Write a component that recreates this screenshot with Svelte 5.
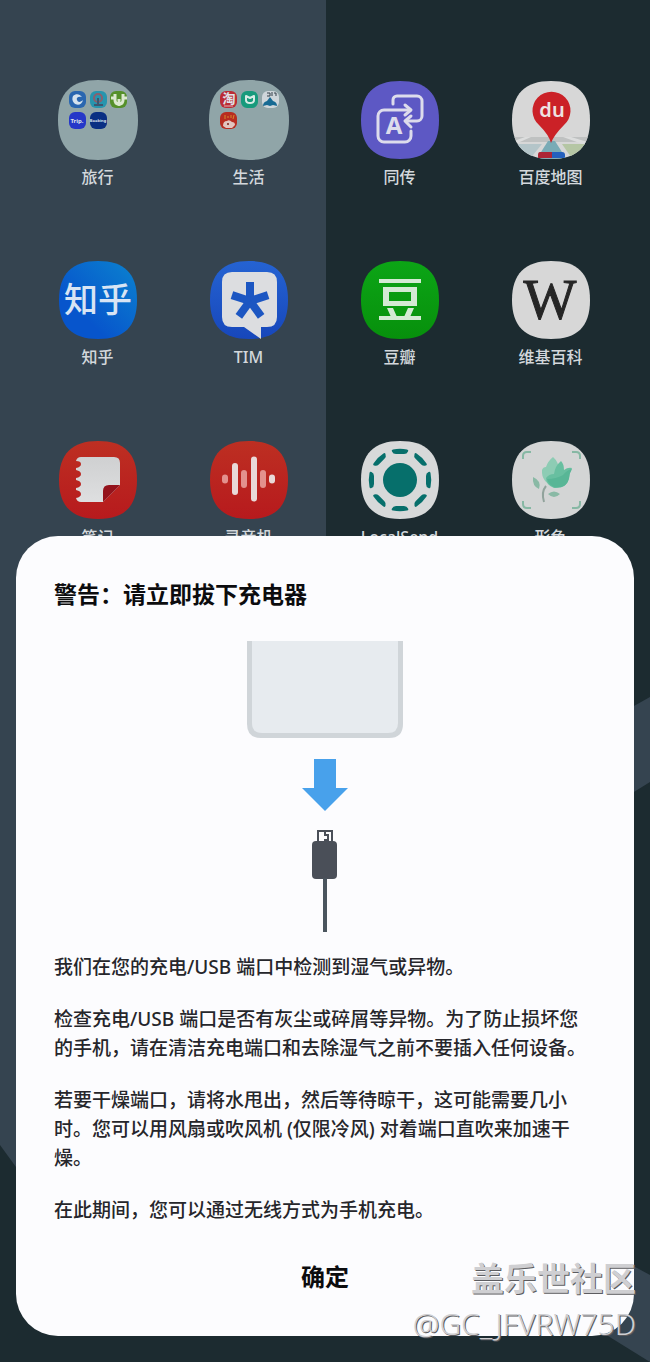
<script lang="ts">
  // Home screen with the moisture warning dialog on top.
  interface App {
    id: string;
    name: string;
  }

  const apps: App[] = [
    { id: 'travel', name: '旅行' },
    { id: 'life', name: '生活' },
    { id: 'interpreter', name: '同传' },
    { id: 'baidu', name: '百度地图' },
    { id: 'zhihu', name: '知乎' },
    { id: 'tim', name: 'TIM' },
    { id: 'douban', name: '豆瓣' },
    { id: 'wiki', name: '维基百科' },
    { id: 'notes', name: '笔记' },
    { id: 'recorder', name: '录音机' },
    { id: 'localsend', name: 'LocalSend' },
    { id: 'xingse', name: '形色' },
  ];

  const fills: Record<string, string> = {
    travel: '#90a5a8',
    life: '#90a5a8',
    interpreter: '#5d58c4',
    baidu: '#d7d7d7',
    zhihu: 'url(#zhihu-bg)',
    tim: 'url(#tim-bg)',
    douban: 'url(#douban-bg)',
    wiki: '#d7d7d7',
    notes: 'url(#red-bg)',
    recorder: 'url(#red-bg)',
    localsend: '#d7d9d9',
    xingse: '#d3d5d5',
  };

  const bars = [
    { x: 16, h: 9, dim: true },
    { x: 26, h: 32, dim: false },
    { x: 35, h: 18, dim: true },
    { x: 45, h: 45, dim: false },
    { x: 54, h: 18, dim: true },
    { x: 63, h: 9, dim: false },
  ];

  const full = 'M40 0C67 0 80 13 80 40S67 80 40 80 0 67 0 40 13 0 40 0Z';
  const round = 'M40 1C66 1 79 13 79 40S66 79 40 79 1 66 1 40 14 1 40 1Z';

  let open = $state(true);
</script>

{#snippet mini(x: number, y: number, fill: string)}
  <rect {x} {y} width="17" height="17" rx="6" {fill} />
{/snippet}

{#snippet icon(id: string)}
  <svg class="icon" viewBox="0 0 80 80" aria-hidden="true">
    <path d={id === 'travel' || id === 'life' ? full : round} fill={fills[id]} />
    {#if id === 'travel'}
      {@render mini(11, 11, '#2a66b0')}
      <path d="M15 16c3-3 7-2 9 1-4-1-6 1-5 3 1 3 4 2 6 0-1 5-6 6-9 3-2-2-2-5-1-7z" fill="#d5e2ee" />
      {@render mini(32, 11, '#2795ae')}
      <circle cx="40" cy="18" r="4" fill="none" stroke="#8b5f6d" stroke-width="2" />
      <path d="M40 18v6M36 25h9" stroke="#3d5670" stroke-width="2" />
      {@render mini(52, 11, '#55902a')}
      <path
        d="M57 14v6q0 4 4 4t4-4v-6M61 19v7M53 18h4M65 18h4"
        fill="none"
        stroke="#dce8d0"
        stroke-width="3"
      />
      {@render mini(11, 32, '#2537c8')}
      <text x="19" y="43" class="tiny" font-size="6">Trip.</text>
      {@render mini(32, 32, '#0a2f83')}
      <text x="40" y="42" class="tiny" font-size="4">Booking</text>
    {:else if id === 'life'}
      {@render mini(11, 11, '#bb2b35')}
      <text x="20" y="23" class="tiny" font-size="13">淘</text>
      <path d="M15 26h9" stroke="#e0b7b9" />
      {@render mini(32, 11, '#189a7c')}
      <path
        d="M37 16v4q0 3 4 3t4-3v-4l-4 2z"
        fill="none"
        stroke="#d8ebe5"
        stroke-width="2"
        stroke-linejoin="round"
      />
      {@render mini(53, 11, '#cfd6da')}
      <path d="M54 26q0-4 4-5l3-4 3 4q4 1 4 5l-4-1-3 1-3-1z" fill="#176a93" />
      <path d="M58 13h3v3h-3M63 12v4M65 13h2v3" fill="none" stroke="#34414a" />
      {@render mini(11, 32, '#b82d20')}
      <path d="M14 46q0-5 4-5 2-2 5 1 3 0 3 3l-3 3h-6z" fill="#e2c5bf" />
      <circle cx="19" cy="44" r="1" fill="#7d2018" />
      <path d="M16 35v4M18 37h2M22 35v3M25 35l-1 4" stroke="#d68b2c" />
    {:else if id === 'interpreter'}
      <g class="line">
        <path d="M50 30H24a6 6 0 0 0-6 6v20a6 6 0 0 0 6 6h21a6 6 0 0 0 6-6v-5" />
        <path d="M45 25l6 5-6 5M51 36l-6 5 6 6" />
        <path d="M33 24v-4a4 4 0 0 1 4-4h20a5 5 0 0 1 5 5v15a5 5 0 0 1-5 5H46" />
      </g>
      <text x="34" y="54" class="latin" font-size="24" fill="#dddcec">A</text>
    {:else if id === 'baidu'}
      <clipPath id="map-clip"><path d={round} /></clipPath>
      <g clip-path="url(#map-clip)">
        <path d="M0 57h80v5H0z" fill="#bfc1c1" />
        <path d="M0 64h31L18 80H0z" fill="#b4c5c9" />
        <path d="M0 62l14-5h6L0 66zM60 57l20 6v4L52 57z" fill="#dcdddd" />
        <path d="M37 61h7l12 19H25z" fill="#79abb6" />
        <path d="M51 64h29v16H62z" fill="#b5c6a4" />
        <path d="M29 72h12v6H27v-3q0-3 2-3z" fill="#ad2535" />
        <path d="M41 72h10q3 0 3 3v3H41z" fill="#2460bd" />
      </g>
      <path d="M40 63Q38 55 28 45a19 19 0 1 1 25 0Q43 55 40 63z" fill="#cb2127" />
      <text x="41" y="37" class="latin du" font-size="20">du</text>
    {:else if id === 'zhihu'}
      <text x="40" y="52" class="han" font-size="34" fill="#d8e4f4">知乎</text>
    {:else if id === 'tim'}
      <path d="M23 12h35q10 0 10 10v35q0 10-10 10h-6v12L35 67H23q-10 0-10-10V22q0-10 10-10z" fill="#dcdde0" />
      <g fill="#1c56c2">
        {#each [0, 72, 144, 216, 288] as angle}
          <path d="M37 22h8v19h-8z" transform="rotate({angle} 41 41)" />
        {/each}
      </g>
    {:else if id === 'douban'}
      <g fill="#d4ead4">
        <path d="M19 19h42v4H19zM19 56h42v4H19z" />
        <path d="M23 27h34v19H23zM29 32v9h22v-9z" fill-rule="evenodd" />
        <path d="M27 48h6l4 9h-6zM48 48h6l-4 9h-6z" />
      </g>
    {:else if id === 'wiki'}
      <text x="39" y="59" class="serif" font-size="56">W</text>
    {:else if id === 'notes'}
      <path
        d="M23 17h33q6 0 6 6v22L45 62H23q-4 0-5-4 5-1 5-4t-5-4v-2q5-1 5-4t-5-4v-2q5-1 5-4t-5-4v-2q5-1 5-4t-5-3q1-4 5-4z"
        fill="url(#paper)"
      />
      <path d="M62 45H51q-6 0-6 6v11z" fill="#94131c" />
    {:else if id === 'recorder'}
      {#each bars as bar}
        <rect x={bar.x - 3} y={39 - bar.h / 2} width="6" height={bar.h} rx="3" fill={bar.dim ? '#e3918d' : '#e9d9d8'} />
      {/each}
    {:else if id === 'localsend'}
      <circle cx="40" cy="40" r="17" fill="#066f6b" />
      {#each [0, 45, 90, 135, 180, 225, 270, 315] as angle}
        <path
          d="M33 9.500q7-1.500 14 0 2 .5 1 2-1 2.500-4 2.500h-8q-3 0-4-2.500-1-1.500 1-2z"
          fill="#066f6b"
          transform="rotate({angle} 40 40)"
        />
      {/each}
    {:else}
      <path
        d="M12 19v-3q0-4 4-4h4M61 12h4q4 0 4 4v3M69 61v3q0 4-4 4h-4M20 68h-4q-4 0-4-4v-3"
        fill="none"
        stroke="#86b8a4"
        stroke-width="2"
      />
      <path d="M42 17q6 5 6 14l-3 16q-15-4-14-17 1-3 4-3 2-6 7-10z" fill="#8dccb4" />
      <path d="M50 21q3 3 3 9 4-3 8-2-3 5-3 11-3 10-15 9-8-3-8-10 3-4 8-4 1-8 7-13z" fill="#68bfa0" />
      <path d="M61 29q-5 1-9 6-7 4-16 4 2 6 7 8 13 2 15-9 0-4 3-9z" fill="#58b696" />
      <path d="M35 46q-5 6-2 16" fill="none" stroke="#91a39c" stroke-width="2" />
      <path d="M22 37q9 4 6 12-7-3-6-12zM37 54q6-5 12 0-6 6-12 0z" fill="#89b9a5" />
    {/if}
  </svg>
{/snippet}

<div class="screen" lang="zh-CN">
  <svg class="wallpaper" viewBox="0 0 650 1362" preserveAspectRatio="xMidYMin slice" aria-hidden="true">
    <defs>
      <linearGradient id="zhihu-bg" x1="0" y1="1" x2="1" y2="0">
        <stop offset="0.3" stop-color="#0755cc" />
        <stop offset="1" stop-color="#0b83cf" />
      </linearGradient>
      <linearGradient id="tim-bg" x1="0" y1="0" x2="0" y2="1">
        <stop offset="0" stop-color="#2563d2" />
        <stop offset="1" stop-color="#1747bb" />
      </linearGradient>
      <linearGradient id="douban-bg" x1="0" y1="0" x2="0" y2="1">
        <stop offset="0" stop-color="#0ca516" />
        <stop offset="1" stop-color="#07900c" />
      </linearGradient>
      <linearGradient id="red-bg" x1="0" y1="0" x2="0" y2="1">
        <stop offset="0" stop-color="#bd2f22" />
        <stop offset="1" stop-color="#b71a1d" />
      </linearGradient>
      <linearGradient id="paper" x1="0" y1="0" x2="0" y2="1">
        <stop offset="0" stop-color="#cfd0d1" />
        <stop offset="1" stop-color="#dedfe0" />
      </linearGradient>
    </defs>
    <path d="M0 0h326v1200H40L16 1167 0 1145z" fill="#354450" />
    <path d="M650 697v85l-50 31V725z" fill="#354450" />
    <path d="M600 1248l50 27v87l-50-31z" fill="#354450" />
  </svg>

  <main class="home">
    {#each apps as app (app.id)}
      <button class="app" type="button">
        {@render icon(app.id)}
        <span class="name">{app.name}</span>
      </button>
    {/each}
  </main>

  {#if open}
    <div class="dialog" role="alertdialog" aria-labelledby="warn-title" aria-describedby="warn-text">
      <h1 id="warn-title">警告：请立即拔下充电器</h1>

      <svg class="figure" viewBox="0 0 156 292" aria-hidden="true">
        <path d="M0 1h156v83q0 14-14 14H14Q0 98 0 84z" fill="#d0d5d9" />
        <path d="M5 1h146v82q0 10-10 10H15Q5 93 5 83z" fill="#e7ebef" />
        <path d="M67 119h22v29h12l-23 23-23-23h12z" fill="#48a1eb" />
        <path d="M71 203v-12h14v12M78 191v4h3v5h-4M78 199v4" fill="none" stroke="#4a4f58" stroke-width="2" />
        <rect x="65" y="201" width="25" height="38" rx="4" fill="#4a4f58" />
        <path d="M78 238v54" stroke="#4b555e" stroke-width="4" />
      </svg>

      <div class="text" id="warn-text">
        <p>我们在您的充电/USB 端口中检测到湿气或异物。</p>
        <p>检查充电/USB 端口是否有灰尘或碎屑等异物。为了防止损坏您的手机，请在清洁充电端口和去除湿气之前不要插入任何设备。</p>
        <p>若要干燥端口，请将水甩出，然后等待晾干，这可能需要几小<br />时。您可以用风扇或吹风机 (仅限冷风) 对着端口直吹来加速干燥。</p>
        <p>在此期间，您可以通过无线方式为手机充电。</p>
      </div>

      <button class="confirm" type="button" onclick={() => (open = false)}>确定</button>
    </div>
  {/if}

  <div class="watermark">
    <span class="community">盖乐世社区</span>
    <span class="user">@GC_JFVRW75D</span>
  </div>
</div>

<style>
  :global(body) {
    margin: 0;
    background: #1c2b30;
  }
  .screen {
    position: relative;
    display: grid;
    min-height: 100vh;
    overflow: hidden;
    background: #1c2b30;
    font-family: 'Noto Sans', 'Noto Sans CJK SC', sans-serif;
  }
  .wallpaper {
    position: absolute;
    inset: 0;
    width: 100%;
    height: 100%;
  }
  .home,
  .dialog {
    grid-area: 1 / 1;
    position: relative;
  }
  .home {
    display: grid;
    grid-template-columns: repeat(4, 1fr);
    grid-auto-rows: 180px;
    align-content: start;
    padding: 80px 24px 0 22px;
  }
  button {
    border: 0;
    padding: 0;
    background: none;
    font-family: inherit;
    cursor: pointer;
  }
  .app {
    display: flex;
    flex-direction: column;
    align-items: center;
    gap: 5px;
  }
  .icon {
    width: 80px;
    height: 80px;
  }
  .icon text {
    text-anchor: middle;
  }
  .tiny {
    font-weight: 700;
    fill: #dfe3ea;
  }
  .latin {
    font-family: 'Noto Sans', sans-serif;
    font-weight: 700;
  }
  .du {
    font-weight: 600;
    fill: #eee2e2;
  }
  .han {
    font-weight: 500;
  }
  .serif {
    font-family: 'Liberation Serif', serif;
    fill: #262626;
    stroke: #262626;
  }
  .line {
    fill: none;
    stroke: #dddcec;
    stroke-width: 3;
    stroke-linecap: round;
    stroke-linejoin: round;
  }
  .name {
    font-size: 16px;
    line-height: 24px;
    font-weight: 500;
    color: #d3d8dc;
  }
  .dialog {
    align-self: end;
    box-sizing: border-box;
    display: flex;
    flex-direction: column;
    margin: 0 16px 26px;
    padding: 42px 38px 39px;
    border-radius: 42px;
    background: #fcfcfe;
    color: #26262b;
  }
  h1 {
    margin: 0;
    font-size: 23px;
    line-height: 32px;
    font-weight: 700;
    color: #0c0c0e;
  }
  .figure {
    align-self: center;
    width: 156px;
    height: 292px;
    margin: 30px 0 21px;
  }
  .text {
    display: flex;
    flex-direction: column;
    gap: 23px;
    font-size: 19px;
    line-height: 29px;
    font-weight: 500;
  }
  p {
    margin: 0;
  }
  .confirm {
    height: 40px;
    margin-top: 32px;
    font-size: 24px;
    line-height: 40px;
    font-weight: 700;
    color: #0c0c0e;
  }
  .watermark {
    position: absolute;
    right: 14px;
    bottom: 16px;
    display: flex;
    flex-direction: column;
    align-items: flex-end;
    color: #cfcfd2;
    text-shadow: 1px 1px 0 #5c5c60;
    pointer-events: none;
  }
  .community {
    font-size: 33px;
    line-height: 46px;
    font-weight: 700;
  }
  .user {
    font-size: 30px;
    line-height: 44px;
    font-weight: 300;
  }
</style>
